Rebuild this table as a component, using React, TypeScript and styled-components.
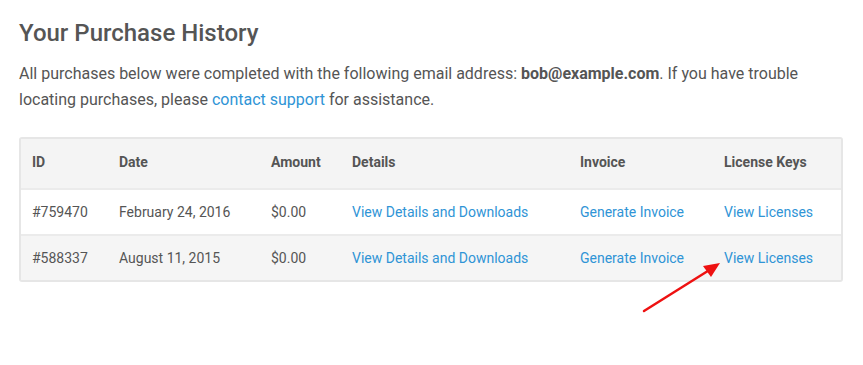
import styled, { createGlobalStyle } from "styled-components";

const GlobalStyle = createGlobalStyle`
  body {
    margin: 0;
    background: #ffffff;
    font-family: "Roboto", "Liberation Sans", sans-serif;
    color: #555555;
  }
`;

type Purchase = {
  id: string;
  date: string;
  amount: string;
};

const purchases: Purchase[] = [
  { id: "#759470", date: "February 24, 2016", amount: "$0.00" },
  { id: "#588337", date: "August 11, 2015", amount: "$0.00" },
];

const columns = [
  { title: "ID", width: 87 },
  { title: "Date", width: 152 },
  { title: "Amount", width: 81 },
  { title: "Details", width: 228 },
  { title: "Invoice", width: 144 },
  { title: "License Keys", width: 128 },
];

const App = () => {
  return (
    <Page>
      <GlobalStyle />
      <Title>Your Purchase History</Title>
      <Intro>
        All purchases below were completed with the following email address:{" "}
        <strong>bob@example.com</strong>. If you have trouble locating purchases,
        please <Link href="#">contact support</Link> for assistance.
      </Intro>
      <Table>
        <colgroup>
          {columns.map((c) => (
            <col key={c.title} style={{ width: c.width }} />
          ))}
        </colgroup>
        <thead>
          <tr>
            {columns.map((c) => (
              <Th key={c.title}>{c.title}</Th>
            ))}
          </tr>
        </thead>
        <tbody>
          {purchases.map((p, i) => (
            <Row key={p.id} $striped={i % 2 === 1}>
              <Td>{p.id}</Td>
              <Td>{p.date}</Td>
              <Td>{p.amount}</Td>
              <Td>
                <Link href="#">View Details and Downloads</Link>
              </Td>
              <Td>
                <Link href="#">Generate Invoice</Link>
              </Td>
              <Td>
                <Link href="#">View Licenses</Link>
              </Td>
            </Row>
          ))}
        </tbody>
      </Table>
      <Arrow width="90" height="60" viewBox="0 0 90 60">
        <line x1="5" y1="54" x2="72" y2="12" stroke="#ee1111" strokeWidth="2.5" strokeLinecap="round" />
        <polygon points="81,6 64,9 72,20" fill="#ee1111" />
      </Arrow>
    </Page>
  );
};

const Page = styled.div`
  position: relative;
  padding: 16px 19px 40px;
  width: 824px;
`;

const Title = styled.h2`
  margin: 0 0 11px;
  font-size: 24px;
  font-weight: 500;
  line-height: 34px;
  color: #555555;
`;

const Intro = styled.p`
  margin: 0 0 24px;
  font-size: 16px;
  line-height: 26px;
  color: #555555;

  strong {
    font-weight: 700;
  }
`;

const Link = styled.a`
  color: #2f94d6;
  text-decoration: none;
`;

const Table = styled.table`
  width: 824px;
  table-layout: fixed;
  border-collapse: separate;
  border-spacing: 0;
  border: 2px solid #e6e6e6;
  border-radius: 3px;
  font-size: 14px;
`;

const Th = styled.th`
  height: 46px;
  padding: 0 0 3px 11px;
  text-align: left;
  font-weight: 700;
  color: #555555;
  background: #f4f4f4;
`;

const Row = styled.tr<{ $striped: boolean }>`
  background: ${({ $striped }) => ($striped ? "#f5f5f5" : "#ffffff")};
`;

const Td = styled.td`
  height: 44px;
  padding: 0 0 0 11px;
  border-top: 2px solid #ebebeb;
  color: #555555;
  white-space: nowrap;
`;

const Arrow = styled.svg`
  position: absolute;
  left: 639px;
  top: 257px;
`;

export default App;
